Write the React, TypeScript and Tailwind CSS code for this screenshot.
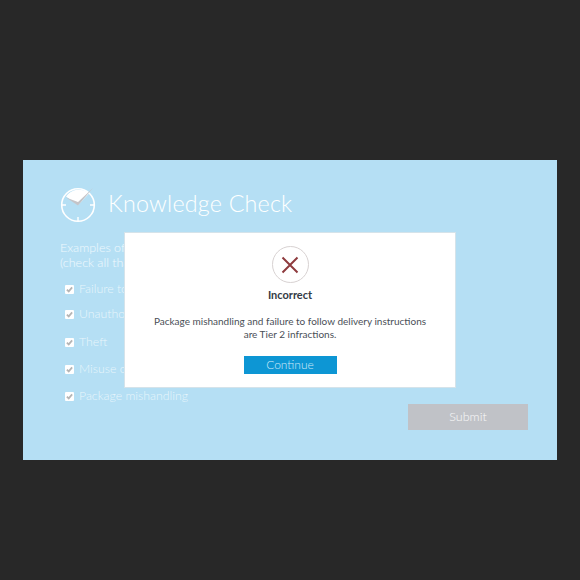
const font = "font-['Lato','Open_Sans',sans-serif]";

function Check() {
  return (
    <span className="flex h-[9px] w-[9px] shrink-0 items-center justify-center rounded-[1px] bg-white">
      <svg width="7" height="7" viewBox="0 0 8 8" fill="none">
        <path d="M1 4.2 L3.1 6.2 L7 1.6" stroke="#b5b5b5" strokeWidth="2" />
      </svg>
    </span>
  );
}

const items: [string, string][] = [
  ["Failure to follow delivery instructions", "mt-0"],
  ["Unauthorized access", "mt-[9px]"],
  ["Theft", "mt-[12px]"],
  ["Misuse of company property", "mt-[11.5px]"],
  ["Package mishandling", "mt-[10.5px]"],
];

export default function App() {
  return (
    <div className={`h-[580px] w-[580px] overflow-hidden bg-[#282828] px-[23px] pt-[160px] ${font}`}>
      <div className="relative h-[300px] w-[534px] bg-[#b5dff4] pl-[37px] pt-[27px] text-white">
        <div className="flex items-center gap-[12px]">
          <svg width="36" height="36" viewBox="0 0 36 36" fill="none">
            <circle cx="18" cy="18" r="16.3" stroke="#fff" strokeWidth="1.6" />
            <path d="M18 18 L6 9.5 A 15.5 15.5 0 0 1 29 6.5 Z" fill="#fff" />
            <path d="M2 18h4M30 18h4M18 30v4" stroke="#fff" strokeWidth="1.4" />
            <path d="M6 10.5 L18 18.5 L33 1 L18 15 Z" fill="#c4c4c8" />
          </svg>
          <h1 className="pb-[3px] text-[23.3px] font-light leading-[33px] tracking-[0.2px]">Knowledge Check</h1>
        </div>
        <p className="mt-[17px] text-[12.5px] font-light leading-[15px] text-white/80">
          Examples of Tier 1 infractions include:
          <br />
          (check all that apply)
        </p>
        <ul className="mt-[11px] pl-[5px]">
          {items.map(([label, mt]) => (
            <li key={label} className={`flex h-[16px] items-center gap-[5px] text-[12.3px] font-light text-white/70 ${mt}`}>
              <Check />
              <span>{label}</span>
            </li>
          ))}
        </ul>
        <div className="flex justify-end pr-[29px]">
          <button className="h-[26px] w-[120px] bg-[#c0c2c7] text-[12.5px] font-light text-white/90">Submit</button>
        </div>

        <div className="absolute left-[101px] top-[72px] flex h-[156px] w-[332px] flex-col items-center border border-[#d5e3ea] bg-white pt-[13px]">
          <div className="flex h-[37px] w-[37px] items-center justify-center rounded-full border border-[#d8d2d2]">
            <svg width="20" height="20" viewBox="0 0 20 20" fill="none">
              <path d="M2.5 2.5 L17.5 17.5 M17.5 2.5 L2.5 17.5" stroke="#8e3b3e" strokeWidth="2" />
            </svg>
          </div>
          <div className="mt-[4px] text-[11px] font-bold leading-[16px] text-[#333a45]">Incorrect</div>
          <p className="mt-[12px] text-center text-[10px] leading-[13px] text-[#4a4f57]">
            Package mishandling and failure to follow delivery instructions
            <br />
            are Tier 2 infractions.
          </p>
          <button className="mt-[15px] h-[18px] w-[93px] bg-[#0d96d4] text-[12px] font-light leading-[18px] text-[#cdeaf8]">Continue</button>
        </div>
      </div>
    </div>
  );
}
